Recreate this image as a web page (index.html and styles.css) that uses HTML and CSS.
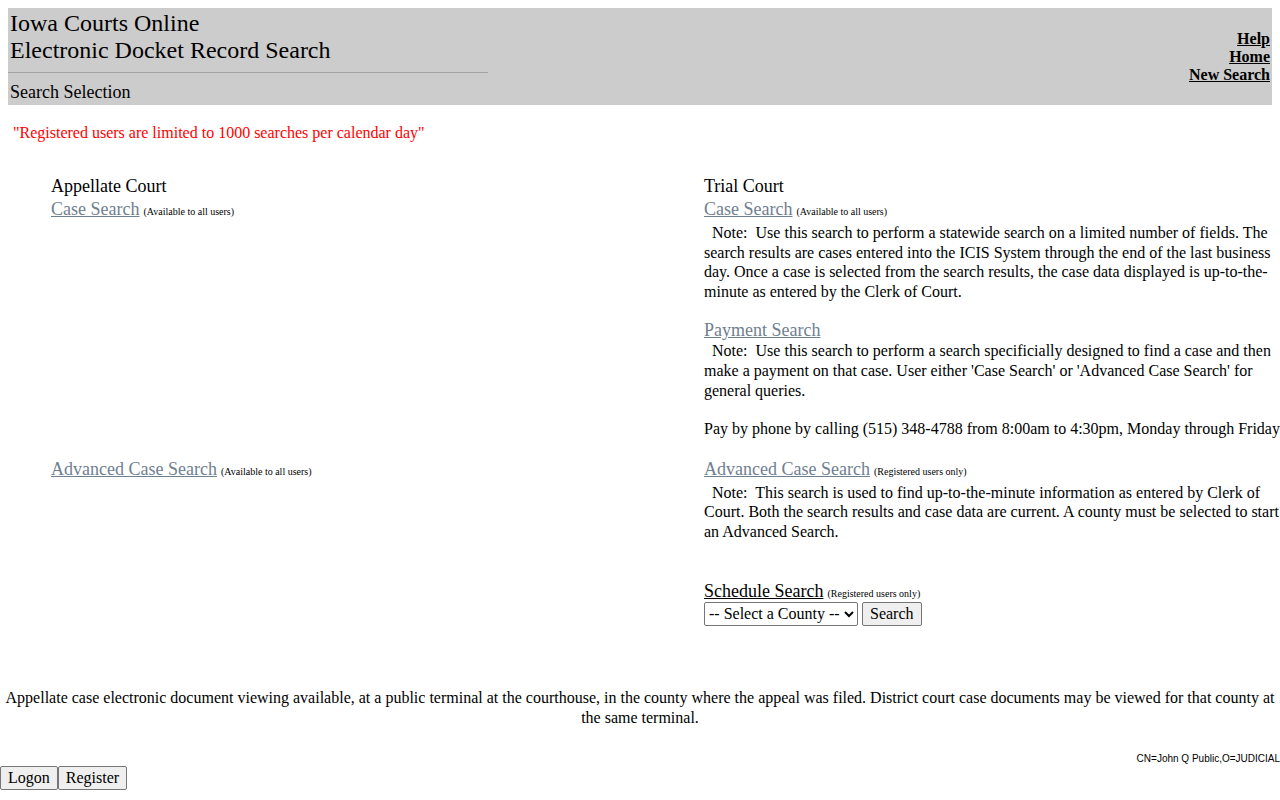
FILE: index.html
```html
<!DOCTYPE html>
<html>
<head>
<meta charset="utf-8">
<title>Iowa Courts Online</title>
<link rel="stylesheet" href="styles.css">
</head>
<body>
<div class="header">
  <div class="header-left">
    <div class="title">Iowa Courts Online<br>Electronic Docket Record Search</div>
    <hr class="rule">
    <div class="subtitle">Search Selection</div>
  </div>
  <div class="header-right">
    <a href="#">Help</a>
    <a href="#">Home</a>
    <a href="#">New Search</a>
  </div>
</div>

<p class="limit">"Registered users are limited to 1000 searches per calendar day"</p>

<div class="courts">
  <div class="col">
    <div class="court-title">Appellate Court</div>
    <div class="link-row"><a class="link" href="#">Case Search</a> <span class="small">(Available to all users)</span></div>
  </div>
  <div class="col">
    <div class="court-title">Trial Court</div>
    <div class="link-row"><a class="link" href="#">Case Search</a> <span class="small">(Available to all users)</span></div>
    <p class="note">&nbsp; Note:&nbsp; Use this search to perform a statewide search on a limited number of fields. The search results are cases entered into the ICIS System through the end of the last business day. Once a case is selected from the search results, the case data displayed is up-to-the-minute as entered by the Clerk of Court.</p>
    <div class="link-row tight"><a class="link" href="#">Payment Search</a></div>
    <p class="note">&nbsp; Note:&nbsp; Use this search to perform a search specificially designed to find a case and then make a payment on that case. User either 'Case Search' or 'Advanced Case Search' for general queries.</p>
    <p class="phone">Pay by phone by calling (515) 348-4788 from 8:00am to 4:30pm, Monday through Friday</p>
  </div>
  <div class="col adv">
    <div class="link-row"><a class="link" href="#">Advanced Case Search</a> <span class="small">(Available to all users)</span></div>
  </div>
  <div class="col adv">
    <div class="link-row"><a class="link" href="#">Advanced Case Search</a> <span class="small">(Registered users only)</span></div>
    <p class="note">&nbsp; Note:&nbsp; This search is used to find up-to-the-minute information as entered by Clerk of Court. Both the search results and case data are current. A county must be selected to start an Advanced Search.</p>
    <div class="schedule">
      <div class="link-row sched"><a class="link dark" href="#">Schedule Search</a> <span class="small">(Registered users only)</span></div>
      <form class="county-form">
        <select class="county"><option>-- Select a County --</option></select>
        <button type="button" class="btn">Search</button>
      </form>
    </div>
  </div>
</div>

<p class="viewing">Appellate case electronic document viewing available, at a public terminal at the courthouse, in the county where the appeal was filed. District court case documents may be viewed for that county at the same terminal.</p>

<div class="cn">CN=John Q Public,O=JUDICIAL</div>
<div class="buttons">
  <button type="button" class="btn">Logon</button><button type="button" class="btn">Register</button>
</div>
</body>
</html>
```

FILE: styles.css
```css
html, body {
  margin: 0;
  padding: 0;
  background: #fff;
  color: #000;
  font-family: "Liberation Serif", "Times New Roman", serif;
  font-size: 16px;
}

.header {
  margin: 8px 8px 0 8px;
  height: 97px;
  background: #cccccc;
  display: flex;
  justify-content: space-between;
}

.header-left {
  width: 480px;
  padding-left: 2px;
}

.title {
  font-size: 24px;
  line-height: 27px;
  padding-top: 2px;
}

.rule {
  width: 480px;
  margin: 8px 0 0 -2px;
  border: 0;
  border-top: 1px solid #a3a3a3;
  height: 0;
}

.subtitle {
  font-size: 18px;
  line-height: 21px;
  margin-top: 9px;
}

.header-right {
  display: flex;
  flex-direction: column;
  align-items: flex-end;
  padding-top: 22px;
  padding-right: 2px;
}

.header-right a {
  color: #000;
  font-weight: bold;
  font-size: 16px;
  line-height: 18px;
  text-decoration: underline;
}

.limit {
  color: #ff0000;
  margin: 18px 0 0 13px;
  font-size: 16px;
  line-height: 19px;
}

.courts {
  display: grid;
  grid-template-columns: 653px 576px;
  margin: 32px 0 0 51px;
  font-size: 16px;
}

.col {
  line-height: 19.6px;
}

.court-title {
  font-size: 18px;
  line-height: 24px;
}

.link-row {
  line-height: 22px;
}

.link-row.tight {
  line-height: 21px;
}

.link-row.sched {
  line-height: 19px;
}

.link {
  color: #6f8090;
  font-size: 18px;
  text-decoration: underline;
}

.link.dark {
  color: #000;
}

.small {
  font-size: 10px;
}

.note {
  margin: 0 0 19px 0;
}

.phone {
  margin: 3px 0 0 0;
  white-space: nowrap;
}

.adv {
  padding-top: 19px;
}

.schedule {
  margin-top: 40px;
}

.county-form {
  display: flex;
  gap: 4px;
  margin: -1px 0 0 0;
}

.county {
  font-family: "Liberation Serif", serif;
  font-size: 16px;
  height: 24px;
  width: 154px;
  border: 1px solid #767676;
  border-radius: 2px;
  background: #fff;
  padding: 0;
}

.btn {
  font-family: "Liberation Serif", serif;
  font-size: 16px;
  height: 24px;
  padding: 0 7px;
  background: #efefef;
  border: 1px solid #767676;
  border-radius: 2px;
  color: #000;
}

.viewing {
  text-align: center;
  margin: 62px 0 0 0;
  font-size: 16px;
  line-height: 20px;
}

.cn {
  text-align: right;
  font-family: "Liberation Sans", Arial, sans-serif;
  font-size: 10px;
  margin-top: 25px;
}

.buttons {
  margin-top: 2px;
  display: flex;
}
```
